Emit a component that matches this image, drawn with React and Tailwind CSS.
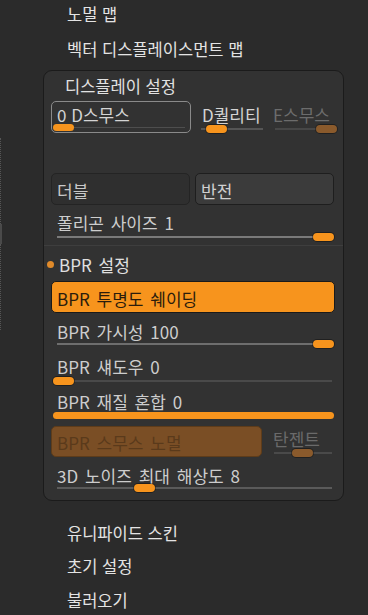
import React from 'react';

const font = { fontFamily: '"Noto Sans CJK KR", "Noto Sans", sans-serif' };

// slider: track with a pill thumb, pct is 0..1
function Slider({ pct = 0, width = 281, className = '', thumb = 'bg-[#f7941d]', track = 'bg-[#5e5e5e]' }) {
  const left = Math.round(pct * (width - 21));
  return (
    <div className={`relative h-[8px] ${className}`} style={{ width }}>
      <div className={`absolute left-[4px] right-[2px] top-[3px] h-[2px] ${track}`} />
      <div
        className={`absolute top-0 h-[8px] w-[21px] rounded-full ${thumb} shadow-[0_0_0_1px_rgba(0,0,0,0.35)]`}
        style={{ left }}
      />
    </div>
  );
}

function MenuItem({ children, className = '' }) {
  return (
    <div className={`flex items-center pl-[65px] text-[16.5px] leading-none text-[#e4e4e4] [word-spacing:1px] ${className}`}>
      {children}
    </div>
  );
}

export default function App() {
  return (
    <div className="flex h-[615px] w-[368px] overflow-hidden bg-[#2b2b2b]" style={font}>
      {/* left edge scroll marks */}
      <div className="flex w-[2px] flex-col">
        <div className="mt-[138px] h-[86px] border-l border-dotted border-[#555]" />
        <div className="h-[20px] w-[2px] bg-[#4a4a4a]" />
        <div className="h-[86px] border-l border-dotted border-[#555]" />
      </div>

      <div className="flex w-[366px] flex-col">
        <MenuItem className="h-[28px] pt-[2px]">노멀 맵</MenuItem>
        <MenuItem className="h-[45px] pt-[2px]">벡터 디스플레이스먼트 맵</MenuItem>

        {/* 디스플레이 설정 panel */}
        <div className="ml-[41px] flex w-[301px] flex-col rounded-[9px] border border-[#1b1b1b] bg-[#323232] text-[17px] leading-none [word-spacing:3px]">
          <div className="flex h-[27px] items-center pl-[21px] pt-[2px] text-[16.5px] text-[#e2e2e2] [word-spacing:1px]">디스플레이 설정</div>

          <div className="mt-[3px] flex h-[32px] gap-[5px] pl-[7px]">
            <div className="flex w-[140px] flex-col rounded-[5px] border border-[#8a8a8a]">
              <div className="flex h-[22px] items-center pl-[5px] pt-[2px] text-[#d4d4d4] [word-spacing:1px]">0 D스무스</div>
              <div className="relative ml-px h-[7px] w-[136px]">
                <div className="absolute left-[20px] right-[4px] top-[3px] h-px bg-[#4e4e4e]" />
                <div className="absolute left-0 top-0 h-[7px] w-[21px] rounded-full bg-[#f7941d]" />
              </div>
            </div>
            <div className="flex w-[70px] flex-col">
              <div className="flex h-[24px] items-center pl-[6px] pt-[2px] text-[#d4d4d4]">D퀄리티</div>
              <Slider pct={0.2} width={68} className="ml-[1px]" track="bg-[#555]" />
            </div>
            <div className="flex w-[66px] flex-col">
              <div className="flex h-[24px] items-center pl-[2px] pt-[2px] text-[#6c6c6c]">E스무스</div>
              <Slider pct={1} width={66} track="bg-[#474747]" thumb="bg-[#8a5a2c]" />
            </div>
          </div>

          <div className="h-[40px]" />

          <div className="flex h-[32px] gap-[5px] pl-[7px]">
            <div className="flex w-[139px] items-center rounded-[5px] border border-[#242424] bg-[#2f2f2f] pl-[5px] pt-[2px] text-[#c8c8c8]">더블</div>
            <div className="flex w-[139px] items-center rounded-[5px] border border-[#1e1e1e] bg-[#3b3b3b] pl-[5px] pt-[2px] text-[#d0d0d0]">반전</div>
          </div>

          <div className="flex h-[28px] items-center pl-[13px] pt-[6px] text-[#cdcdcd]">폴리곤 사이즈 1</div>
          <Slider pct={1} className="ml-[9px]" track="bg-[#7a7a7a]" />

          <div className="mt-[4px] h-px bg-[#3e3e3e]" />

          <div className="flex h-[34px] items-center pl-[3px] pt-[2px] text-[#e0e0e0]">
            <span className="mr-[5px] h-[7px] w-[7px] rounded-full bg-[#e08a2a]" />
            BPR 설정
          </div>

          <div className="ml-[7px] mt-px flex h-[32px] w-[284px] items-center rounded-[5px] border border-[#1a1a1a] bg-[#f7941d] pl-[5px] pt-[2px] text-[#2b1c0c]">
            BPR 투명도 쉐이딩
          </div>

          <div className="flex h-[27px] items-center pl-[13px] pt-[9px] text-[#cdcdcd]">BPR 가시성 100</div>
          <Slider pct={1} className="ml-[9px]" track="bg-[#6e6e6e]" />

          <div className="flex h-[29px] items-center pl-[13px] pt-[8px] text-[#cdcdcd]">BPR 섀도우 0</div>
          <Slider pct={0} className="ml-[9px]" track="bg-[#4a4a4a]" />

          <div className="flex h-[27px] items-center pl-[13px] pt-[6px] text-[#cdcdcd]">BPR 재질 혼합 0</div>
          <div className="ml-[9px] h-[7px] w-[281px] rounded-full bg-[#f7941d]" />

          <div className="mt-[7px] flex h-[31px] gap-[8px] pl-[7px]">
            <div className="flex w-[211px] items-center rounded-[5px] border border-[#5e3c1a] bg-[#7a4e25] pl-[5px] pt-[2px] text-[#5a3a1b]">
              BPR 스무스 노멀
            </div>
            <div className="flex w-[64px] flex-col">
              <div className="flex h-[22px] items-center pl-[3px] pt-[2px] text-[#6a6a6a]">탄젠트</div>
              <Slider pct={0.5} width={64} className="mt-px" track="bg-[#4a4a4a]" thumb="bg-[#8a5a2c]" />
            </div>
          </div>

          <div className="flex h-[27px] items-center pl-[13px] pt-[10px] text-[#cdcdcd]">3D 노이즈 최대 해상도 8</div>
          <Slider pct={81 / 260} className="ml-[9px]" track="bg-[#5a5a5a]" />
          <div className="h-[8px]" />
        </div>

        <MenuItem className="mt-[12px] h-[35px] pt-[5px]">유니파이드 스킨</MenuItem>
        <MenuItem className="h-[35px] pt-[5px]">초기 설정</MenuItem>
        <MenuItem className="h-[35px] pt-[5px]">불러오기</MenuItem>
      </div>
    </div>
  );
}
